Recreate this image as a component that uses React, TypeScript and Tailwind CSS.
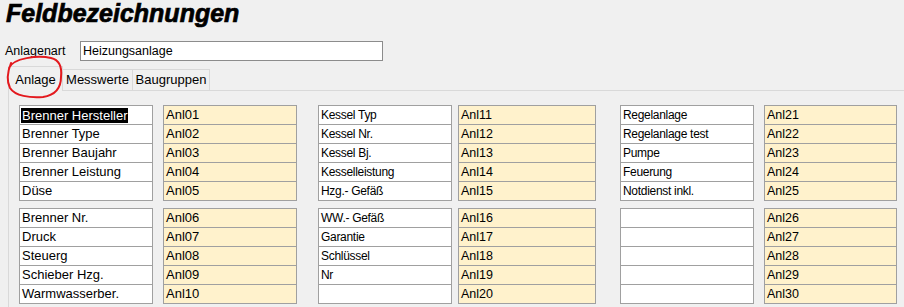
import React from "react";

type Row = { label: string; value: string; selected?: boolean };

const col1: Row[][] = [
    [
        { label: "Brenner Hersteller", value: "Anl01", selected: true },
        { label: "Brenner Type", value: "Anl02" },
        { label: "Brenner Baujahr", value: "Anl03" },
        { label: "Brenner Leistung", value: "Anl04" },
        { label: "Düse", value: "Anl05" },
    ],
    [
        { label: "Brenner Nr.", value: "Anl06" },
        { label: "Druck", value: "Anl07" },
        { label: "Steuerg", value: "Anl08" },
        { label: "Schieber Hzg.", value: "Anl09" },
        { label: "Warmwasserber.", value: "Anl10" },
    ],
];

const col2: Row[][] = [
    [
        { label: "Kessel Typ", value: "Anl11" },
        { label: "Kessel Nr.", value: "Anl12" },
        { label: "Kessel Bj.", value: "Anl13" },
        { label: "Kesselleistung", value: "Anl14" },
        { label: "Hzg.- Gefäß", value: "Anl15" },
    ],
    [
        { label: "WW.- Gefäß", value: "Anl16" },
        { label: "Garantie", value: "Anl17" },
        { label: "Schlüssel", value: "Anl18" },
        { label: "Nr", value: "Anl19" },
        { label: "", value: "Anl20" },
    ],
];

const col3: Row[][] = [
    [
        { label: "Regelanlage", value: "Anl21" },
        { label: "Regelanlage test", value: "Anl22" },
        { label: "Pumpe", value: "Anl23" },
        { label: "Feuerung", value: "Anl24" },
        { label: "Notdienst inkl.", value: "Anl25" },
    ],
    [
        { label: "", value: "Anl26" },
        { label: "", value: "Anl27" },
        { label: "", value: "Anl28" },
        { label: "", value: "Anl29" },
        { label: "", value: "Anl30" },
    ],
];

const box = "h-[20px] border border-[#a0a0a0] flex items-center pl-[1px] whitespace-nowrap overflow-hidden";

const FieldColumn = ({
    groups,
    first,
    gapClass,
    valueClass,
    className,
}: {
    groups: Row[][];
    first?: boolean;
    gapClass: string;
    valueClass: string;
    className?: string;
}) => {
    const labelFont = first ? "text-[13px]" : "text-[12px] tracking-[-0.3px]";
    const valueFont = first ? "text-[13px]" : "text-[12.5px]";
    return (
        <div className={`flex flex-col gap-[7px] ${className ?? ""}`}>
            {groups.map((g, gi) => (
                <div key={gi} className="flex flex-col">
                    {g.map((r, i) => (
                        <div key={r.value} className={`flex ${gapClass} ${i > 0 ? "-mt-px" : ""}`}>
                            <div className={`${box} w-[134px] bg-white text-black ${labelFont}`}>
                                {r.selected ? (
                                    <span className="bg-black pl-[1px] leading-[15px] text-white">{r.label}</span>
                                ) : (
                                    <span className="pl-[1px]">{r.label}</span>
                                )}
                            </div>
                            <div className={`${box} ${valueClass} bg-[#fff2cc] text-black ${valueFont}`}>
                                <span className="pl-[1px]">{r.value}</span>
                            </div>
                        </div>
                    ))}
                </div>
            ))}
        </div>
    );
};

export default function App() {
    return (
        <div className="relative flex h-[307px] w-[904px] flex-col overflow-hidden bg-[#f0f0f0] font-['Liberation_Sans',Arial,sans-serif] text-black">
            <h1 className="pl-[6px] text-[25px] font-bold italic leading-[27px] [-webkit-text-stroke:0.7px_#000]">
                Feldbezeichnungen
            </h1>

            <div className="mt-[14px] flex items-center text-[12.5px]">
                <span className="ml-[5px] w-[75px]">Anlagenart</span>
                <div className="flex h-[20px] w-[303px] items-center border border-[#8c8c8c] bg-white pl-[2px]">
                    Heizungsanlage
                </div>
            </div>

            <div className="relative z-10 mt-[5px] flex h-[24px] items-end text-[13px]">
                <div className="-mb-px ml-[8px] flex h-[25px] w-[55px] items-start justify-center border-x border-t border-[#d9d9d9] bg-[#f0f0f0] pt-[3px]">
                    Anlage
                </div>
                <div className="flex h-[21px] w-[70px] items-center justify-center border border-b-0 border-l-0 border-[#d9d9d9] bg-[#f0f0f0]">
                    Messwerte
                </div>
                <div className="flex h-[21px] w-[77px] items-center justify-center border border-b-0 border-l-0 border-[#d9d9d9] bg-[#f0f0f0]">
                    Baugruppen
                </div>
            </div>

            <div className="ml-[8px] flex flex-1 border-l border-t border-[#d9d9d9] pl-[10px] pt-[14px]">
                <FieldColumn groups={col1} first gapClass="gap-[10px]" valueClass="w-[134px]" />
                <FieldColumn groups={col2} gapClass="gap-[6px]" valueClass="w-[138px]" className="ml-[21px]" />
                <FieldColumn groups={col3} gapClass="gap-[10px]" valueClass="w-[133px]" className="ml-[24px]" />
            </div>

            <svg className="pointer-events-none absolute left-0 top-0 z-20" width="90" height="110" viewBox="0 0 90 110">
                <path
                    d="M 9 68 C 13 58, 38 55, 51 58 C 60 60, 62 68, 61 77 C 61 87, 56 95, 43 97 C 30 98, 15 96, 10 88 C 7 82, 7 73, 11 63"
                    fill="none"
                    stroke="#e3191e"
                    strokeWidth="2"
                    strokeLinecap="round"
                />
            </svg>
        </div>
    );
}
